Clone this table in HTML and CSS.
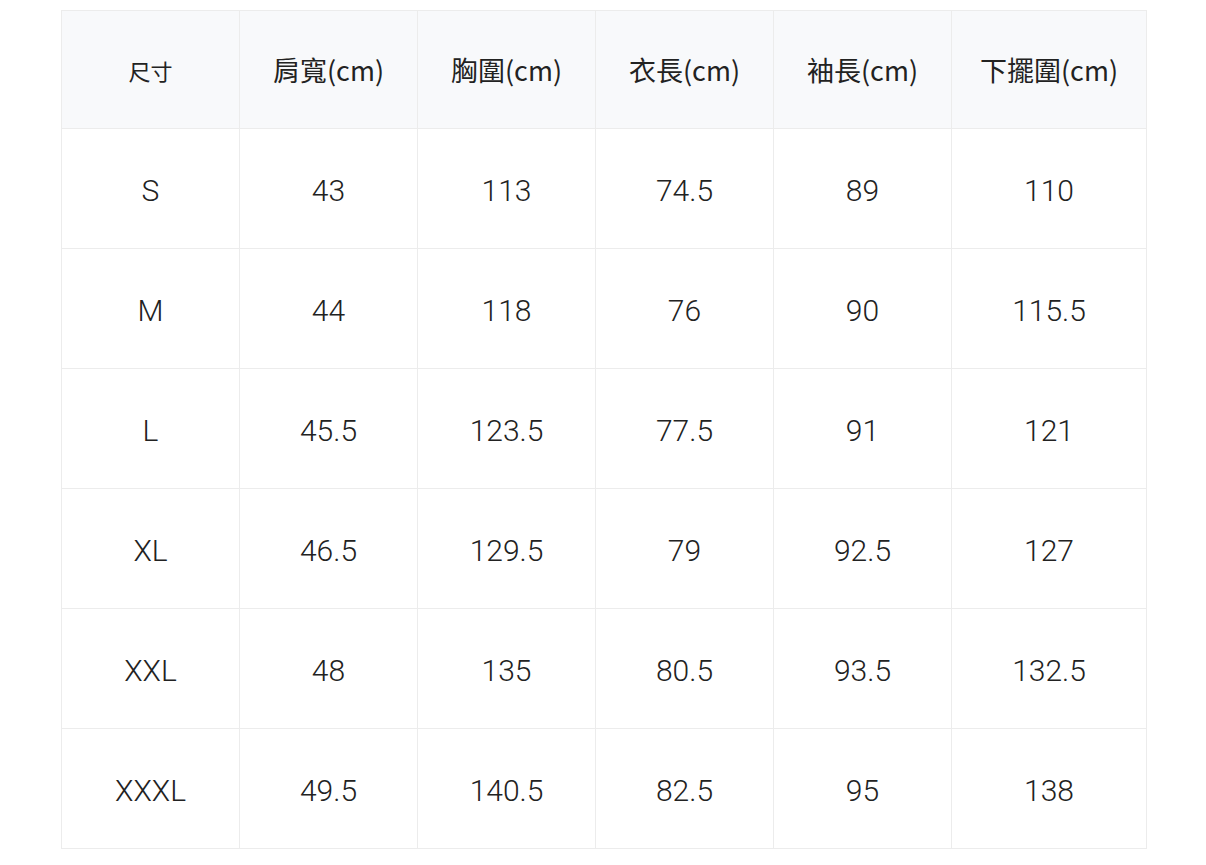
FILE: index.html
```html
<!DOCTYPE html>
<html lang="zh-Hant">
<head>
<meta charset="utf-8">
<link rel="stylesheet" href="styles.css">
</head>
<body>
<div class="wrap">
<table class="size-table">
  <colgroup>
    <col class="c"><col class="c"><col class="c"><col class="c"><col class="c"><col class="c-last">
  </colgroup>
  <thead>
    <tr>
      <th class="small">尺寸</th>
      <th>肩寬(cm)</th>
      <th>胸圍(cm)</th>
      <th>衣長(cm)</th>
      <th>袖長(cm)</th>
      <th>下擺圍(cm)</th>
    </tr>
  </thead>
  <tbody>
    <tr><td>S</td><td>43</td><td>113</td><td>74.5</td><td>89</td><td>110</td></tr>
    <tr><td>M</td><td>44</td><td>118</td><td>76</td><td>90</td><td>115.5</td></tr>
    <tr><td>L</td><td>45.5</td><td>123.5</td><td>77.5</td><td>91</td><td>121</td></tr>
    <tr><td>XL</td><td>46.5</td><td>129.5</td><td>79</td><td>92.5</td><td>127</td></tr>
    <tr><td>XXL</td><td>48</td><td>135</td><td>80.5</td><td>93.5</td><td>132.5</td></tr>
    <tr><td>XXXL</td><td>49.5</td><td>140.5</td><td>82.5</td><td>95</td><td>138</td></tr>
  </tbody>
</table>
</div>
</body>
</html>
```
FILE: styles.css
```css
html, body {
  margin: 0;
  padding: 0;
  background: #ffffff;
}
.wrap {
  padding: 10px 0 0 61px;
}
.size-table {
  border-collapse: collapse;
  table-layout: fixed;
  width: 1085px;
  font-family: "Roboto", "Noto Sans CJK TC", sans-serif;
  color: #222222;
}
.size-table col.c { width: 178px; }
.size-table col.c-last { width: 195px; }
.size-table th,
.size-table td {
  border: 1px solid #ececec;
  text-align: center;
  vertical-align: middle;
  padding: 0;
}
.size-table th {
  height: 117px;
  background: #f8f9fb;
  font-family: "Noto Sans CJK TC", "Roboto", sans-serif;
  font-weight: 400;
  font-size: 27px;
}
.size-table th.small {
  font-size: 22px;
}
.size-table td {
  height: 115px;
  padding-top: 4px;
  font-size: 30px;
  font-weight: 300;
  background: #ffffff;
}
```
